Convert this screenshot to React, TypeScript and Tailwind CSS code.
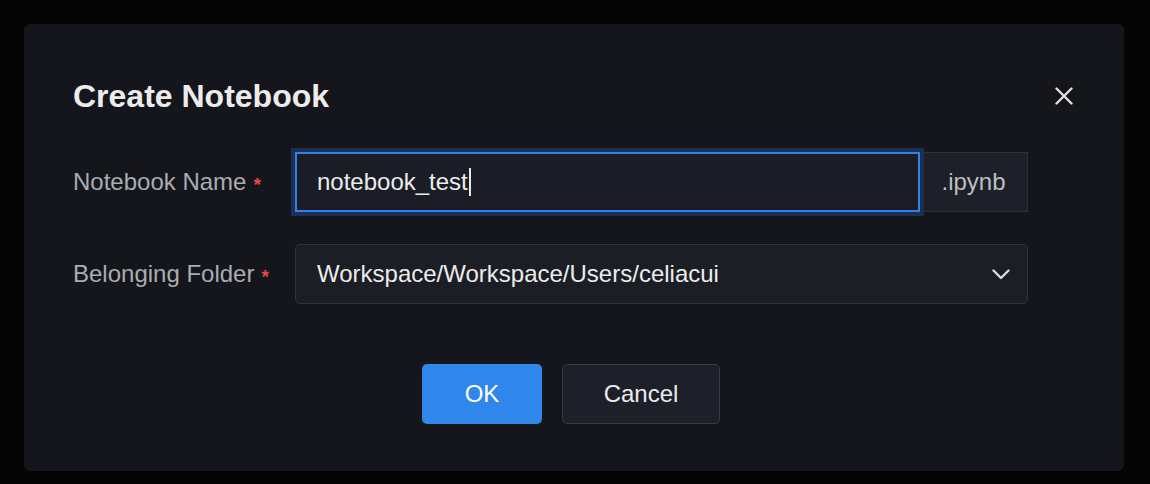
import { useState } from 'react';

const FONT = "font-['Liberation_Sans','Helvetica_Neue',Arial,sans-serif]";

function CloseIcon() {
  return (
    <svg width="18" height="18" viewBox="0 0 18 18" fill="none" stroke="currentColor" strokeWidth={2.4} strokeLinecap="round">
      <path d="M1.5 1.5l15 15" />
      <path d="M16.5 1.5l-15 15" />
    </svg>
  );
}

function ChevronDown() {
  return (
    <svg width="18" height="11" viewBox="0 0 18 11" fill="none" stroke="currentColor" strokeWidth={2.4} strokeLinecap="round" strokeLinejoin="round">
      <path d="M1.5 1.5l7.5 7.5 7.5-7.5" />
    </svg>
  );
}

function Label({ children }: { children: string }) {
  return (
    <div className="w-[222px] flex-shrink-0 flex items-center text-[24px] text-[#a9acb3]">
      <span>{children}</span>
      <span className="ml-[7px] text-[19px] font-bold text-[#e5484d] translate-y-[3px]">*</span>
    </div>
  );
}

export default function App() {
  const [name, setName] = useState('notebook_test');

  return (
    <div className={`w-[1150px] h-[484px] bg-[#050505] pt-6 pl-6 ${FONT}`}>
      <div className="w-[1100px] h-[447px] bg-[#15161b] rounded-md pt-[52px] pl-[49px] pr-[51px] pb-[47px] flex flex-col">
        {/* Header */}
        <div className="h-10 flex items-center justify-between">
          <h2 className="text-[32px] font-bold text-[#ececec] leading-none">Create Notebook</h2>
          <button type="button" aria-label="Close" className="text-[#e0e0e0]">
            <CloseIcon />
          </button>
        </div>

        {/* Form */}
        <div className="mt-9 flex flex-col gap-8">
          <div className="flex items-center h-[60px]">
            <Label>Notebook Name</Label>
            <div className="flex h-[60px] w-[733px]">
              <div className="flex-1 relative h-full border-2 border-[#2f83e6] bg-[#1a1d25] shadow-[0_0_0_4px_#1b2f52] flex items-center pl-5">
                <span className="text-[24px] text-[#ececec]">{name}</span>
                <span className="w-[2px] h-[28px] bg-[#e8e8e8] ml-[1px]" />
                <input
                  value={name}
                  onChange={e => setName(e.target.value)}
                  className="absolute inset-0 opacity-0"
                  aria-label="Notebook Name"
                />
              </div>
              <div className="h-full w-[108px] flex items-center justify-center bg-[#1d2028] border border-[#2b2f38] border-l-0 text-[24px] text-[#bcbec4]">
                .ipynb
              </div>
            </div>
          </div>

          <div className="flex items-center h-[60px]">
            <Label>Belonging Folder</Label>
            <div className="w-[733px] h-[60px] rounded-[5px] border border-[#2f333d] bg-[#1b1e25] flex items-center justify-between pl-[21px] pr-[17px]">
              <span className="text-[24px] text-[#ececec]">Workspace/Workspace/Users/celiacui</span>
              <span className="text-[#dcdcdc]">
                <ChevronDown />
              </span>
            </div>
          </div>
        </div>

        {/* Footer */}
        <div className="mt-[60px] flex justify-center gap-5 pr-1">
          <button type="button" className="w-[120px] h-[60px] rounded-[5px] bg-[#2f86eb] text-[24px] text-white">
            OK
          </button>
          <button type="button" className="w-[158px] h-[60px] rounded-[5px] bg-[#1d2028] border border-[#363a45] text-[24px] text-[#ececec]">
            Cancel
          </button>
        </div>
      </div>
    </div>
  );
}
